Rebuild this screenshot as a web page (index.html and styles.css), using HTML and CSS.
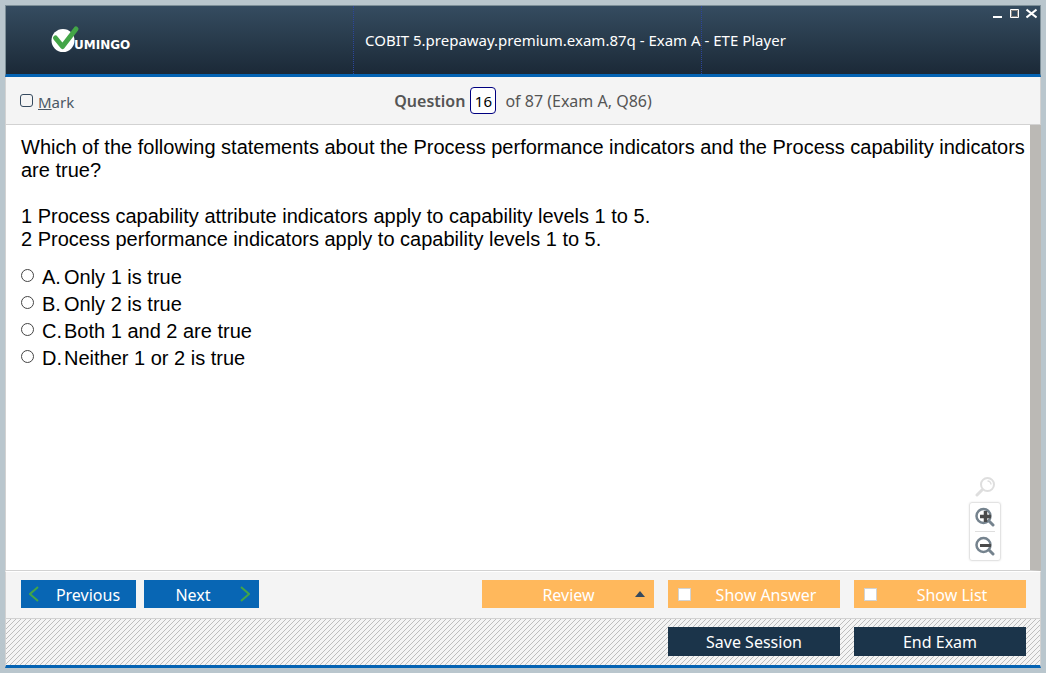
FILE: index.html
```html
<!DOCTYPE html>
<html lang="en">
<head>
<meta charset="utf-8">
<title>ETE Player</title>
<link rel="stylesheet" href="styles.css">
</head>
<body>
<div class="window">
  <header class="titlebar">
    <div class="brand">
      <svg class="logo" width="84" height="30" viewBox="0 0 84 30" role="img" aria-label="Vumingo">
        <circle cx="12" cy="15.500" r="11.500" fill="#fff"/>
        <path d="M4.500 13l7 8.500L25 4" fill="none" stroke="#43a547" stroke-width="5" stroke-linecap="round" stroke-linejoin="round"/>
        <text class="logo-text" x="23" y="24">UMINGO</text>
      </svg>
    </div>
    <h1 class="title">COBIT 5.prepaway.premium.exam.87q - Exam A - ETE Player</h1>
    <div class="controls">
      <button class="control" type="button" aria-label="Minimize"><svg width="11" height="11" viewBox="0 0 11 11"><path d="M1 8h9v2H1z" fill="#fff"/></svg></button>
      <button class="control" type="button" aria-label="Maximize"><svg width="11" height="11" viewBox="0 0 11 11"><path d="M1.500 1.500h8v8h-8z" fill="none" stroke="#fff"/><path d="M2.500 2.500h6v6h-6z" fill="none" stroke="#8a8580"/></svg></button>
      <button class="control" type="button" aria-label="Close"><svg width="11" height="11" viewBox="0 0 11 11"><path d="M0.500 1.500l10 8M10.500 1.500l-10 8" stroke="#fff" stroke-width="2"/></svg></button>
    </div>
  </header>

  <div class="infobar">
    <label class="mark"><input class="mark-box" type="checkbox"><span><u>M</u>ark</span></label>
    <div class="counter">
      <label class="counter-label" for="number">Question</label>
      <input class="counter-input" id="number" type="text" value="16">
      <span>of 87 (Exam A, Q86)</span>
    </div>
  </div>

  <main class="content">
    <form class="question">
      <p class="text">Which of the following statements about the Process performance indicators and the Process capability indicators are true?</p>
      <p class="text">1 Process capability attribute indicators apply to capability levels 1 to 5.<br>2 Process performance indicators apply to capability levels 1 to 5.</p>
      <div class="answers">
        <label class="answer"><input class="radio" type="radio" name="answer"><span class="letter">A.</span>Only 1 is true</label>
        <label class="answer"><input class="radio" type="radio" name="answer"><span class="letter">B.</span>Only 2 is true</label>
        <label class="answer"><input class="radio" type="radio" name="answer"><span class="letter">C.</span>Both 1 and 2 are true</label>
        <label class="answer"><input class="radio" type="radio" name="answer"><span class="letter">D.</span>Neither 1 or 2 is true</label>
      </div>
    </form>
    <div class="zoom">
      <button class="zoom-button" type="button" aria-label="Reset zoom"><svg width="20" height="20" viewBox="0 0 20 20" fill="none" stroke="#dedede"><circle cx="12.500" cy="7.500" r="6.500" stroke-width="2"/><path d="M12.500 4a3.500 3.500 0 0 1 3.500 3.500" stroke-width="1.500"/><path d="M7 13l-5 5" stroke-width="3" stroke-linecap="round"/></svg></button>
      <div class="zoom-group">
        <button class="zoom-button" type="button" aria-label="Zoom in"><svg width="20" height="20" viewBox="0 0 20 20" fill="none" stroke="#75838e"><circle cx="8.500" cy="9" r="7" stroke-width="2.500"/><path d="M14 14l4 4" stroke-width="3" stroke-linecap="round"/><path d="M5 9.500h11M10.500 4v11" stroke="#4a4a4a" stroke-width="3.500"/></svg></button>
        <button class="zoom-button zoom-out" type="button" aria-label="Zoom out"><svg width="20" height="20" viewBox="0 0 20 20" fill="none" stroke="#75838e"><circle cx="8.500" cy="9" r="7" stroke-width="2.500"/><path d="M14 14l4 4" stroke-width="3" stroke-linecap="round"/><path d="M5 9.500h11" stroke="#4a4a4a" stroke-width="3"/></svg></button>
      </div>
    </div>
  </main>

  <nav class="toolbar">
    <button class="button nav" type="button"><svg width="10" height="16" viewBox="0 0 10 16"><path d="M9 1L1 8l8 7" fill="none" stroke="#43a547" stroke-width="2"/></svg><span class="grow">Previous</span></button>
    <button class="button nav next" type="button"><span class="grow">Next</span><svg width="10" height="16" viewBox="0 0 10 16"><path d="M1 1l8 7-8 7" fill="none" stroke="#43a547" stroke-width="2"/></svg></button>
    <span class="spacer"></span>
    <button class="button option review" type="button"><span class="grow">Review</span><svg width="10" height="6" viewBox="0 0 10 6"><path d="M0 6l5-6 5 6z" fill="#34495e"/></svg></button>
    <label class="button option"><input class="option-box" type="checkbox"><span class="grow">Show Answer</span></label>
    <label class="button option"><input class="option-box" type="checkbox"><span class="grow">Show List</span></label>
  </nav>

  <footer class="footer">
    <button class="button session" type="button">Save Session</button>
    <button class="button session" type="button">End Exam</button>
  </footer>
</div>
</body>
</html>
```
FILE: styles.css
```css
* { box-sizing: border-box; }

body {
  margin: 0;
  background: #b9c6cd;
  font-family: "Noto Sans", "Open Sans", sans-serif;
  font-size: 16px;
}

button, input { font: inherit; margin: 0; }
button { padding: 0; border: 0; background: none; }
svg { display: block; flex: none; }

.window {
  display: flex;
  flex-direction: column;
  height: 100vh;
  padding: 5px;
}

.titlebar {
  display: grid;
  grid-template-columns: 347px 349px 1fr;
  flex: none;
  height: 72px;
  border: 1px solid #7d8f98;
  border-bottom: 3px solid #0463b3;
  background: linear-gradient(#354c60, #1b2937);
  color: #fff;
}

.brand { padding: 19px 0 0 45px; }

.logo-text {
  font: bold 12px "DejaVu Sans", sans-serif;
  fill: #fff;
}

.title {
  margin: 0;
  padding: 0 0 0 11px;
  border: 0 dotted #2c459c;
  border-width: 0 1px;
  font-size: 15px;
  font-weight: 400;
  line-height: 68px;
  white-space: nowrap;
}

.controls {
  display: flex;
  align-items: flex-start;
  justify-content: flex-end;
  gap: 6px;
  padding: 2px 3px;
}

.infobar {
  display: grid;
  grid-template-columns: 1fr auto 1fr;
  align-items: center;
  flex: none;
  height: 48px;
  padding: 0 14px;
  border: 1px solid #d2d2d2;
  border-top: 0;
  background: #f4f4f4;
  color: #555;
}

.mark {
  display: flex;
  align-items: center;
  gap: 5px;
  padding-top: 2px;
  color: #4a5865;
  font-size: 15px;
}

.mark-box {
  appearance: none;
  width: 13px;
  height: 13px;
  margin-bottom: 2px;
  border: 1px solid #34495e;
  border-radius: 3px;
}

.counter {
  display: flex;
  align-items: center;
}

.counter-label { font-weight: 600; }

.counter-input {
  width: 26px;
  height: 27px;
  margin: 0 9px 0 5px;
  padding: 0;
  border: 1px solid #000080;
  border-radius: 4px;
  background: #fff;
  color: #000;
  font-size: 15px;
  text-align: center;
}

.content {
  position: relative;
  flex: 1;
  min-height: 0;
  border: solid #d2d2d2;
  border-width: 0 0 1px 1px;
  background: #fff;
  border-right: 11px solid #bbb9b5;
}

.question {
  padding: 11px 4px 0 15px;
  font: 20px/23px "Liberation Sans", Arial, sans-serif;
  color: #000;
}

.text { margin: 0 0 23px; }
.answers { margin-top: -10px; }

.answer {
  display: flex;
  align-items: center;
  height: 27px;
}

.radio {
  appearance: none;
  width: 13px;
  height: 13px;
  margin: 0 8px 4px 0;
  border: 1px solid #444;
  border-radius: 50%;
}

.letter { width: 22px; }

.zoom {
  position: absolute;
  right: 29px;
  bottom: 9px;
  display: flex;
  flex-direction: column;
  align-items: center;
  gap: 5px;
}

.zoom-group {
  padding: 0 5px;
  border: 1px solid #e3e3e3;
  border-radius: 3px;
  box-shadow: 0 0 2px #e3e3e3;
}

.zoom-button {
  display: grid;
  place-items: center;
}

.zoom-group .zoom-button { height: 28px; }
.zoom-group .zoom-out { height: 29px; border-top: 1px solid #dedede; }

.toolbar {
  display: flex;
  flex: none;
  align-items: flex-start;
  gap: 14px;
  height: 48px;
  padding: 8px 14px 0 15px;
  border: 1px solid #d2d2d2;
  border-top-color: #fff;
  background: #f4f4f4;
}

.button {
  display: flex;
  align-items: center;
  justify-content: center;
  height: 28px;
  color: #fff;
  font-size: 16px;
  line-height: 28px;
  white-space: nowrap;
}

.grow {
  flex: 1;
  padding-top: 2px;
  text-align: center;
}

.spacer { flex: 1; }

.nav {
  width: 115px;
  padding: 0 9px 0 8px;
  background: #0866b4;
}

.nav .grow { padding-left: 10px; }

.next {
  margin-left: -6px;
}

.next .grow { padding: 2px 6px 0 0; }

.option {
  width: 172px;
  padding: 0 9px 0 10px;
  background: #ffb85c;
}

.option .grow { padding-left: 10px; }

.option-box {
  appearance: none;
  width: 13px;
  height: 13px;
  border: 1px solid #d2d2d2;
  background: #fff;
}

.footer {
  display: flex;
  flex: none;
  align-items: flex-start;
  justify-content: flex-end;
  gap: 14px;
  height: 49px;
  padding: 8px 14px;
  border: 1px solid #d2d2d2;
  border-top: 0;
  border-bottom: 3px solid #0463b3;
  background: #f4f4f4 linear-gradient(135deg, transparent 45%, #bdbdbd 45%, #bdbdbd 55%, transparent 55%) 0 0 / 5px 5px;
}

.session {
  width: 172px;
  height: 29px;
  background: #1b344a;
}
```
